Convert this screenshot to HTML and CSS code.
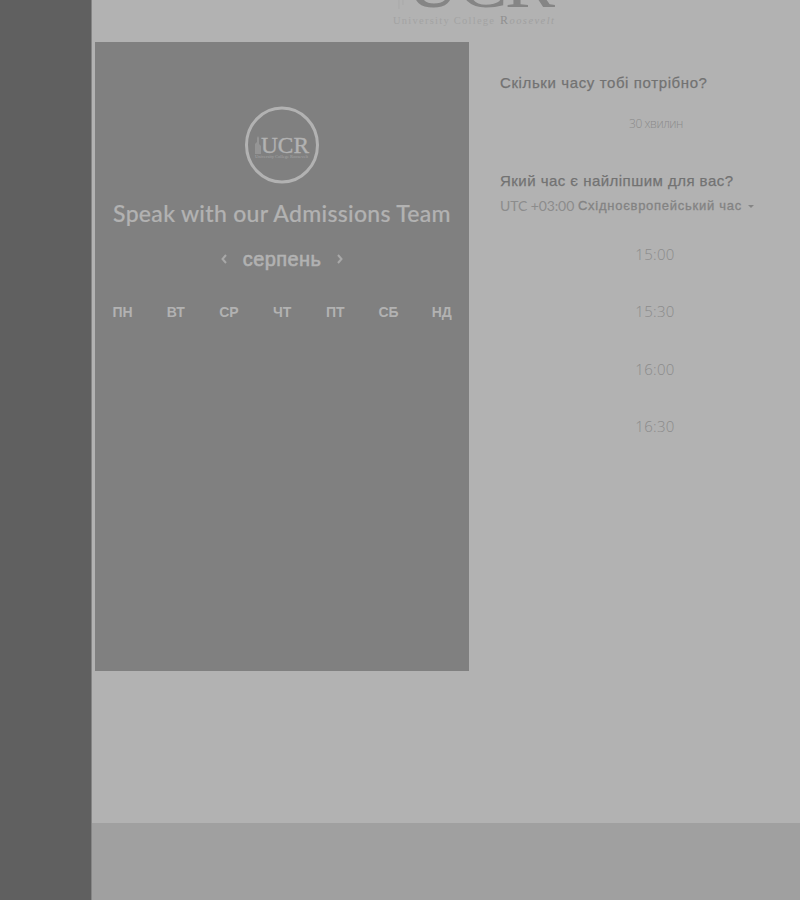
FILE: index.html
```
<!DOCTYPE html>
<html lang="uk">
<head>
<meta charset="utf-8">
<title>Speak with our Admissions Team</title>
<link rel="stylesheet" href="styles.css">
</head>
<body>
<div class="page">
  <aside class="side"></aside>
  <div class="main">
    <header class="brand">
      <svg width="170" height="42" viewBox="0 0 170 42">
        <path d="M8 0V9M12 0V5" stroke="#a9a9a9" fill="none"/>
        <text class="brand-name" x="15" y="7" textLength="149">UCR</text>
        <text class="brand-sub" x="2" y="24" textLength="101">University College</text>
        <text class="brand-sub brand-em" x="109" y="24" textLength="54"><tspan class="brand-cap">R</tspan>oosevelt</text>
      </svg>
    </header>
    <div class="booking">
      <section class="calendar">
        <svg class="avatar" width="76" height="78" viewBox="0 0 76 78">
          <ellipse cx="38" cy="39" rx="35.5" ry="37" fill="none" stroke="#b2b2b2" stroke-width="3"/>
          <path d="M11 48V38l2-2v-4l1-2 1 2v6l2 2v8z" fill="#959595"/>
          <text class="avatar-name" x="17" y="47" textLength="48" lengthAdjust="spacingAndGlyphs">UCR</text>
          <text class="avatar-sub" x="11" y="52" textLength="53" lengthAdjust="spacingAndGlyphs">University College Roosevelt</text>
        </svg>
        <h1 class="title">Speak with our Admissions Team</h1>
        <div class="month">
          <svg class="arrow" width="8" height="12" viewBox="0 0 8 12"><path d="M6 2 2.500 6 6 10"/></svg>
          <span class="month-name">серпень</span>
          <svg class="arrow" width="8" height="12" viewBox="0 0 8 12"><path d="M2 2 5.500 6 2 10"/></svg>
        </div>
        <div class="days"><span>ПН</span><span>ВТ</span><span>СР</span><span>ЧТ</span><span>ПТ</span><span>СБ</span><span>НД</span></div>
      </section>
      <section class="options">
        <h2 class="question q-length">Скільки часу тобі потрібно?</h2>
        <div class="duration">30 хвилин</div>
        <h2 class="question q-time">Який час є найліпшим для вас?</h2>
        <div class="zone"><span class="utc">UTC +03:00</span><span class="zone-name">Східноєвропейський час</span><i class="caret"></i></div>
        <div class="times"><span>15:00</span><span>15:30</span><span>16:00</span><span>16:30</span></div>
      </section>
    </div>
    <footer class="foot"></footer>
  </div>
</div>
</body>
</html>
```
FILE: styles.css
```
* { box-sizing: border-box; }
body { margin: 0; background: #b2b2b2; font-family: "Liberation Sans", sans-serif; }
.page { display: flex; height: 900px; overflow: hidden; }
.side { width: 92px; flex: none; background: #606060; border-right: 1px solid #858585; }
.main { flex: 1; display: flex; flex-direction: column; }
.brand { height: 42px; padding-left: 299px; }
.brand svg { display: block; }
.brand-name { font: 75px "Liberation Serif", serif; fill: #858585; }
.brand-sub { font: 10.5px "Liberation Serif", serif; fill: #a3a3a3; }
.brand-em { font-style: italic; fill: #a0a0a0; }
.brand-cap { font-style: normal; font-size: 12px; fill: #909090; }
.booking { display: flex; height: 629px; padding-left: 3px; }
.calendar { width: 374px; background: #808080; padding-top: 64px; display: flex; flex-direction: column; align-items: center; color: #b2b2b2; }
.avatar { display: block; flex: none; }
.avatar-name { font: 24px "Liberation Serif", serif; fill: #b2b2b2; stroke: #b2b2b2; stroke-width: 0.4px; }
.avatar-sub { font: 4px "Liberation Serif", serif; fill: #a5a5a5; }
.title { margin: 14px 0 0; font: 500 23px/30px Lato, sans-serif; letter-spacing: 0.3px; white-space: nowrap; -webkit-text-stroke: 0.2px #b2b2b2; }
.month { display: flex; align-items: center; justify-content: center; height: 30px; margin-top: 16px; gap: 15px; }
.month-name { font-size: 20px; line-height: 30px; letter-spacing: 0.4px; -webkit-text-stroke: 0.6px #b2b2b2; }
.arrow { fill: none; stroke: #a8a8a8; stroke-width: 2; }
.days { align-self: stretch; display: grid; grid-template-columns: repeat(7, 53.2px); margin: 30px 0 0 1px; font-size: 14px; line-height: 16px; font-weight: 700; text-align: center; }
.options { flex: 1; padding: 31px 0 0 31px; color: #727272; }
.question { margin: 0; font-size: 15px; line-height: 20px; font-weight: 400; letter-spacing: 0.61px; white-space: nowrap; -webkit-text-stroke: 0.25px #727272; }
.duration { width: 312px; margin-top: 22px; font: 300 12px/18px "Open Sans", sans-serif; letter-spacing: -0.45px; color: #8b8b8b; text-align: center; }
.q-time { margin-top: 38px; letter-spacing: 0.47px; }
.zone { display: flex; align-items: center; height: 20px; margin-top: 5px; color: #838383; white-space: nowrap; }
.utc { width: 78px; font: 14px/20px Lato, sans-serif; color: #8c8c8c; letter-spacing: -0.1px; }
.zone-name { font-size: 13px; line-height: 20px; letter-spacing: 0.73px; -webkit-text-stroke: 0.3px #838383; }
.caret { margin-left: 6px; border: 3px solid transparent; border-top-color: #858585; border-bottom: 0; }
.times { display: flex; flex-direction: column; width: 310px; margin-top: 28px; gap: 37.3px; font: 300 15px/20px "Open Sans", sans-serif; letter-spacing: 0.3px; color: #8b8b8b; text-align: center; }
.foot { height: 77px; margin-top: 152px; background: #a0a0a0; }
```
